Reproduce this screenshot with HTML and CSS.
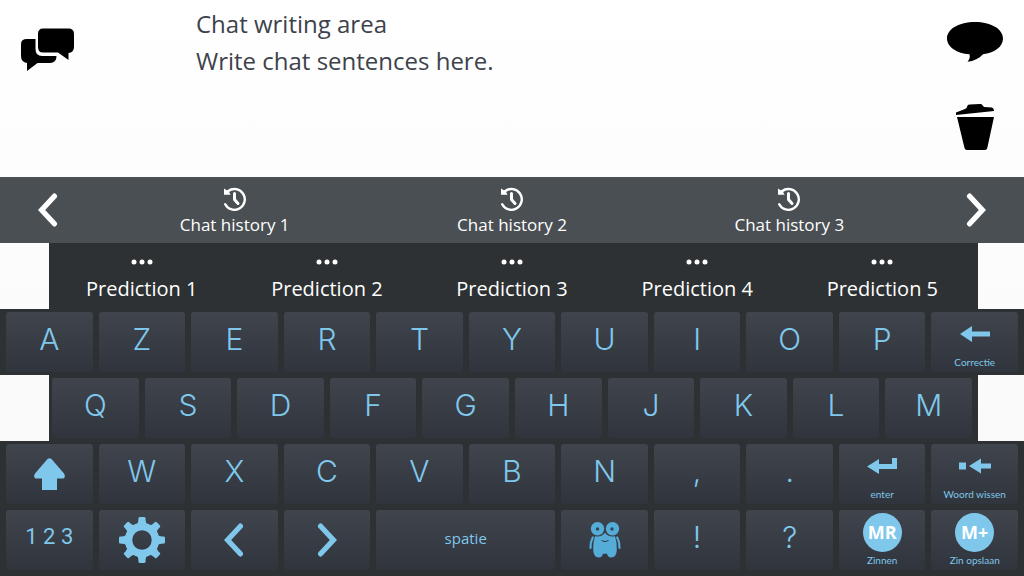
FILE: index.html
```html
<!DOCTYPE html>
<html lang="nl">
<head>
<meta charset="utf-8">
<meta name="viewport" content="width=device-width, initial-scale=1">
<title>Chat</title>
<link rel="stylesheet" href="styles.css">
</head>
<body>
<svg class="sprite" aria-hidden="true">
  <symbol id="prev" viewBox="0 0 20 32"><path d="M16 3 L4 16 L16 29" fill="none" stroke="currentColor" stroke-width="5" stroke-linecap="round"/></symbol>
  <symbol id="next" viewBox="0 0 20 32"><path d="M4 3 L16 16 L4 29" fill="none" stroke="currentColor" stroke-width="5" stroke-linecap="round"/></symbol>
  <symbol id="history" viewBox="0 0 24 24"><path d="M5 4.2 A10.4 10.4 0 1 1 2.2 17.3" fill="none" stroke="currentColor" stroke-width="2.4" stroke-linecap="round"/><path d="M1 1.5 L3.3 3 L5.4 3.8 L7.6 7.8 L1 7.8 Z" fill="currentColor"/><path d="M11.500 6.500 V12.500 L15 16.500" fill="none" stroke="currentColor" stroke-width="3" stroke-linecap="round" stroke-linejoin="round"/></symbol>
  <symbol id="dots" viewBox="0 0 22 6"><g fill="currentColor"><circle cx="3" cy="3" r="2.500"/><circle cx="11" cy="3" r="2.500"/><circle cx="19" cy="3" r="2.500"/></g></symbol>
</svg>
<main class="board">
  <section class="composer">
    <button class="tool" type="button" aria-label="Chats">
      <svg width="54" height="44" viewBox="0 0 54 44"><path d="M6 11 H14.500 V21 Q14.500 28 21 28 H35.500 Q35.500 35 29 35 H16.500 L6 43 V35 Q0 34 0 28 V16 Q0 11 6 11 Z"/><path d="M22 .5 H47.500 Q53 .5 53 6 V19 Q53 24.500 47.500 25 V32 L37 24.500 H22 Q17 24.500 17 19 V6 Q17 .5 22 .5 Z"/></svg>
    </button>
    <textarea class="writing" aria-label="Chat writing area" spellcheck="false">Chat writing area
Write chat sentences here.</textarea>
    <div class="actions">
      <button class="tool" type="button" aria-label="Speak">
        <svg width="56" height="40" viewBox="0 0 56 40"><path d="M28 0 C44 0 56 7 56 16.500 C56 25 47 31 36 32.200 C32 36.500 27 39 20.500 39.800 C22.500 37.500 23.300 35 22.500 32.300 C10 31.500 0 25 0 16.500 C0 7 12 0 28 0 Z"/></svg>
      </button>
      <button class="tool" type="button" aria-label="Clear">
        <svg width="38" height="46" viewBox="0 0 38 46"><path d="M0 8.500 L9 5 Q11 4.500 11.500 1.500 Q12 .7 14 .6 L24 0 Q26 0 26.500 1.200 L28 3 L36 3.500 Q38 4 38 7 L0 11 Z"/><path d="M1 13 H38 L31.500 43 Q31 46 29 46 H11 Q9 46 8.500 44 Z"/></svg>
      </button>
    </div>
  </section>

  <nav class="history" aria-label="Chat history">
    <button class="plain arrow" type="button" aria-label="Previous"><svg width="22" height="34"><use href="#prev"/></svg></button>
    <button class="plain" type="button"><svg width="24" height="24"><use href="#history"/></svg><span>Chat history 1</span></button>
    <button class="plain" type="button"><svg width="24" height="24"><use href="#history"/></svg><span>Chat history 2</span></button>
    <button class="plain" type="button"><svg width="24" height="24"><use href="#history"/></svg><span>Chat history 3</span></button>
    <button class="plain arrow" type="button" aria-label="Next"><svg width="22" height="34"><use href="#next"/></svg></button>
  </nav>

  <section class="predictions inset" aria-label="Predictions">
    <button class="plain" type="button"><svg width="22" height="6"><use href="#dots"/></svg><span>Prediction 1</span></button>
    <button class="plain" type="button"><svg width="22" height="6"><use href="#dots"/></svg><span>Prediction 2</span></button>
    <button class="plain" type="button"><svg width="22" height="6"><use href="#dots"/></svg><span>Prediction 3</span></button>
    <button class="plain" type="button"><svg width="22" height="6"><use href="#dots"/></svg><span>Prediction 4</span></button>
    <button class="plain" type="button"><svg width="22" height="6"><use href="#dots"/></svg><span>Prediction 5</span></button>
  </section>

  <div class="row">
    <button class="key" type="button">A</button>
    <button class="key" type="button">Z</button>
    <button class="key" type="button">E</button>
    <button class="key" type="button">R</button>
    <button class="key" type="button">T</button>
    <button class="key" type="button">Y</button>
    <button class="key" type="button">U</button>
    <button class="key" type="button">I</button>
    <button class="key" type="button">O</button>
    <button class="key" type="button">P</button>
    <button class="key captioned" type="button"><svg width="30" height="16" viewBox="0 0 30 16"><path d="M0 8 L12 0 V5.500 H30 V10.500 H12 V16 Z"/></svg><span>Correctie</span></button>
  </div>

  <div class="row inset">
    <button class="key" type="button">Q</button>
    <button class="key" type="button">S</button>
    <button class="key" type="button">D</button>
    <button class="key" type="button">F</button>
    <button class="key" type="button">G</button>
    <button class="key" type="button">H</button>
    <button class="key" type="button">J</button>
    <button class="key" type="button">K</button>
    <button class="key" type="button">L</button>
    <button class="key" type="button">M</button>
  </div>

  <div class="row">
    <button class="key pictured" type="button" aria-label="Shift"><svg width="31" height="32" viewBox="0 0 31 32"><path d="M13.500 1 Q15.500 -.5 17.500 1 L30 15.500 Q32 19 29.500 20.500 H23 V32 H8 V20.500 H1.500 Q-1 19 1 15.500 Z"/></svg></button>
    <button class="key" type="button">W</button>
    <button class="key" type="button">X</button>
    <button class="key" type="button">C</button>
    <button class="key" type="button">V</button>
    <button class="key" type="button">B</button>
    <button class="key" type="button">N</button>
    <button class="key" type="button">,</button>
    <button class="key" type="button">.</button>
    <button class="key captioned" type="button"><svg width="30" height="16" viewBox="0 0 30 16"><path d="M0 8.500 L12 1 V6 H25 V0 H30 V11 H12 V16 Z"/></svg><span>enter</span></button>
    <button class="key captioned" type="button"><svg width="32" height="16" viewBox="0 0 32 16"><path d="M0 4.500 H7 V11.500 H0 Z M10 8 L22 .5 V5.500 H32 V10.500 H22 V15.500 Z"/></svg><span>Woord wissen</span></button>
  </div>

  <div class="row last">
    <button class="key digits" type="button">1 2 3</button>
    <button class="key pictured" type="button" aria-label="Settings"><svg width="46" height="46" viewBox="-23 -23 46 46"><defs><path id="tooth" d="M-5.500 -15 Q-3.500 -17 -3.500 -22 Q-3.500 -23 -2 -23 H2 Q3.500 -23 3.500 -22 Q3.500 -17 5.500 -15 Z"/></defs><circle r="13.500" fill="none" stroke="currentColor" stroke-width="7.500"/><use href="#tooth"/><use href="#tooth" transform="rotate(45)"/><use href="#tooth" transform="rotate(90)"/><use href="#tooth" transform="rotate(135)"/><use href="#tooth" transform="rotate(180)"/><use href="#tooth" transform="rotate(225)"/><use href="#tooth" transform="rotate(270)"/><use href="#tooth" transform="rotate(315)"/></svg></button>
    <button class="key pictured" type="button" aria-label="Cursor left"><svg width="22" height="34"><use href="#prev"/></svg></button>
    <button class="key pictured" type="button" aria-label="Cursor right"><svg width="22" height="34"><use href="#next"/></svg></button>
    <button class="key space" type="button">spatie</button>
    <button class="key pictured mascot" type="button" aria-label="Menu"><svg width="32" height="36" viewBox="0 0 32 36"><path d="M8.500 14.500 Q13.500 14.500 16 10.800 Q18.500 14.500 23.500 14.500 Q25 14.500 26 14 Q28 20 27.800 28 Q27.500 35.500 22 35.500 Q18.800 35.500 18 31.800 H14 Q13.200 35.500 10 35.500 Q4.500 35.500 4.200 28 Q4 20 6 14 Q7 14.500 8.500 14.500 Z"/><path d="M3.800 15.500 Q1.300 20 1.500 26 M28.200 15.500 Q30.700 20 30.500 26" fill="none" stroke="currentColor" stroke-width="2.200" stroke-linecap="round"/><path d="M12.500 18.500 Q16 20.800 19.500 18.500" fill="none" stroke="#343840" stroke-width="1"/><g><circle cx="8.500" cy="6.800" r="6.700"/><circle cx="23.500" cy="6.800" r="6.700"/></g><g fill="#284b60"><circle cx="8.500" cy="7" r="1.700"/><circle cx="23" cy="7" r="1.700"/></g></svg></button>
    <button class="key" type="button">!</button>
    <button class="key" type="button">?</button>
    <button class="key captioned" type="button"><b class="disc">MR</b><span>Zinnen</span></button>
    <button class="key captioned" type="button"><b class="disc">M+</b><span>Zin opslaan</span></button>
  </div>
</main>
</body>
</html>
```

FILE: styles.css
```css
:root {
  --dark: #2d3133;
  --bar: #4a4f53;
  --sky: #7fc8ec;
  --ink: #3c424c;
}

* { box-sizing: border-box; }

body {
  margin: 0;
  font-family: "Open Sans", "Noto Sans", sans-serif;
  background: #fff;
}

button, textarea {
  margin: 0;
  border: 0;
  padding: 0;
  background: none;
  color: inherit;
  font: inherit;
}

button { cursor: pointer; }

svg {
  display: block;
  fill: currentColor;
}

.sprite {
  position: absolute;
  width: 0;
  height: 0;
}

.board {
  display: grid;
  grid-template-rows: minmax(177px, 177fr) repeat(5, minmax(66px, 66fr)) minmax(69px, 69fr);
  min-height: 100vh;
  background: linear-gradient(#fff, #f8f8f8);
}

.composer {
  display: grid;
  grid-template-columns: 96px 1fr 98px;
  padding-bottom: 8px;
}

.tool {
  display: grid;
  place-items: center;
  color: #000;
}

.composer > .tool {
  align-self: start;
  height: 100px;
}

.actions {
  display: grid;
  grid-template-rows: 1fr 1fr;
}

.writing {
  padding: 5px 0 0 100px;
  resize: none;
  outline: none;
  font-size: 24px;
  line-height: 37px;
  color: var(--ink);
}

.plain {
  display: flex;
  flex-direction: column;
  align-items: center;
  justify-content: center;
}

.history {
  display: grid;
  grid-template-columns: 96px repeat(3, 1fr) 96px;
  background: var(--bar);
  color: #fff;
  font-size: 17px;
  line-height: 24px;
}

.history .plain {
  gap: 2px;
  padding-top: 4px;
}

.history .arrow { padding-top: 0; }

.inset { margin: 0 4.5% 0 4.8%; }

.predictions {
  display: grid;
  grid-template-columns: repeat(5, 1fr);
  padding-right: 3px;
  background: var(--dark);
  color: #fff;
  font-size: 20px;
  line-height: 28px;
}

.predictions .plain {
  gap: 10px;
  padding-top: 10px;
}

.row {
  display: grid;
  grid-template-columns: repeat(11, minmax(0, 1fr));
  gap: 6px;
  padding: 3px 6px;
  background: var(--dark);
}

.row.inset {
  grid-template-columns: repeat(10, minmax(0, 1fr));
  padding-left: 3px;
}

.row.last { padding-bottom: 6px; }

.key {
  display: grid;
  place-items: center;
  place-content: center;
  padding-bottom: 7px;
  border-radius: 3px;
  background: linear-gradient(#40444d, #30343c);
  color: var(--sky);
  font-family: Inter, "Open Sans", sans-serif;
  font-size: 30px;
  font-weight: 300;
  line-height: 36px;
}

.key.pictured { padding-bottom: 0; }

.mascot { color: #55acd6; }

.digits {
  font-family: Roboto, sans-serif;
  font-size: 22px;
  font-weight: 400;
}

.space {
  grid-column: span 2;
  padding-bottom: 4px;
  font-family: "Open Sans", sans-serif;
  font-size: 15px;
  font-weight: 400;
}

.captioned {
  grid-template-rows: 44px 12px;
  padding-bottom: 4px;
  font-family: Lato, "Open Sans", sans-serif;
  font-size: 10px;
  font-weight: 400;
  line-height: 12px;
}

.disc {
  display: grid;
  place-items: center;
  width: 39px;
  height: 39px;
  border-radius: 50%;
  background: var(--sky);
  color: #fff;
  font-family: "Open Sans", sans-serif;
  font-size: 18px;
  font-weight: 700;
}
```
